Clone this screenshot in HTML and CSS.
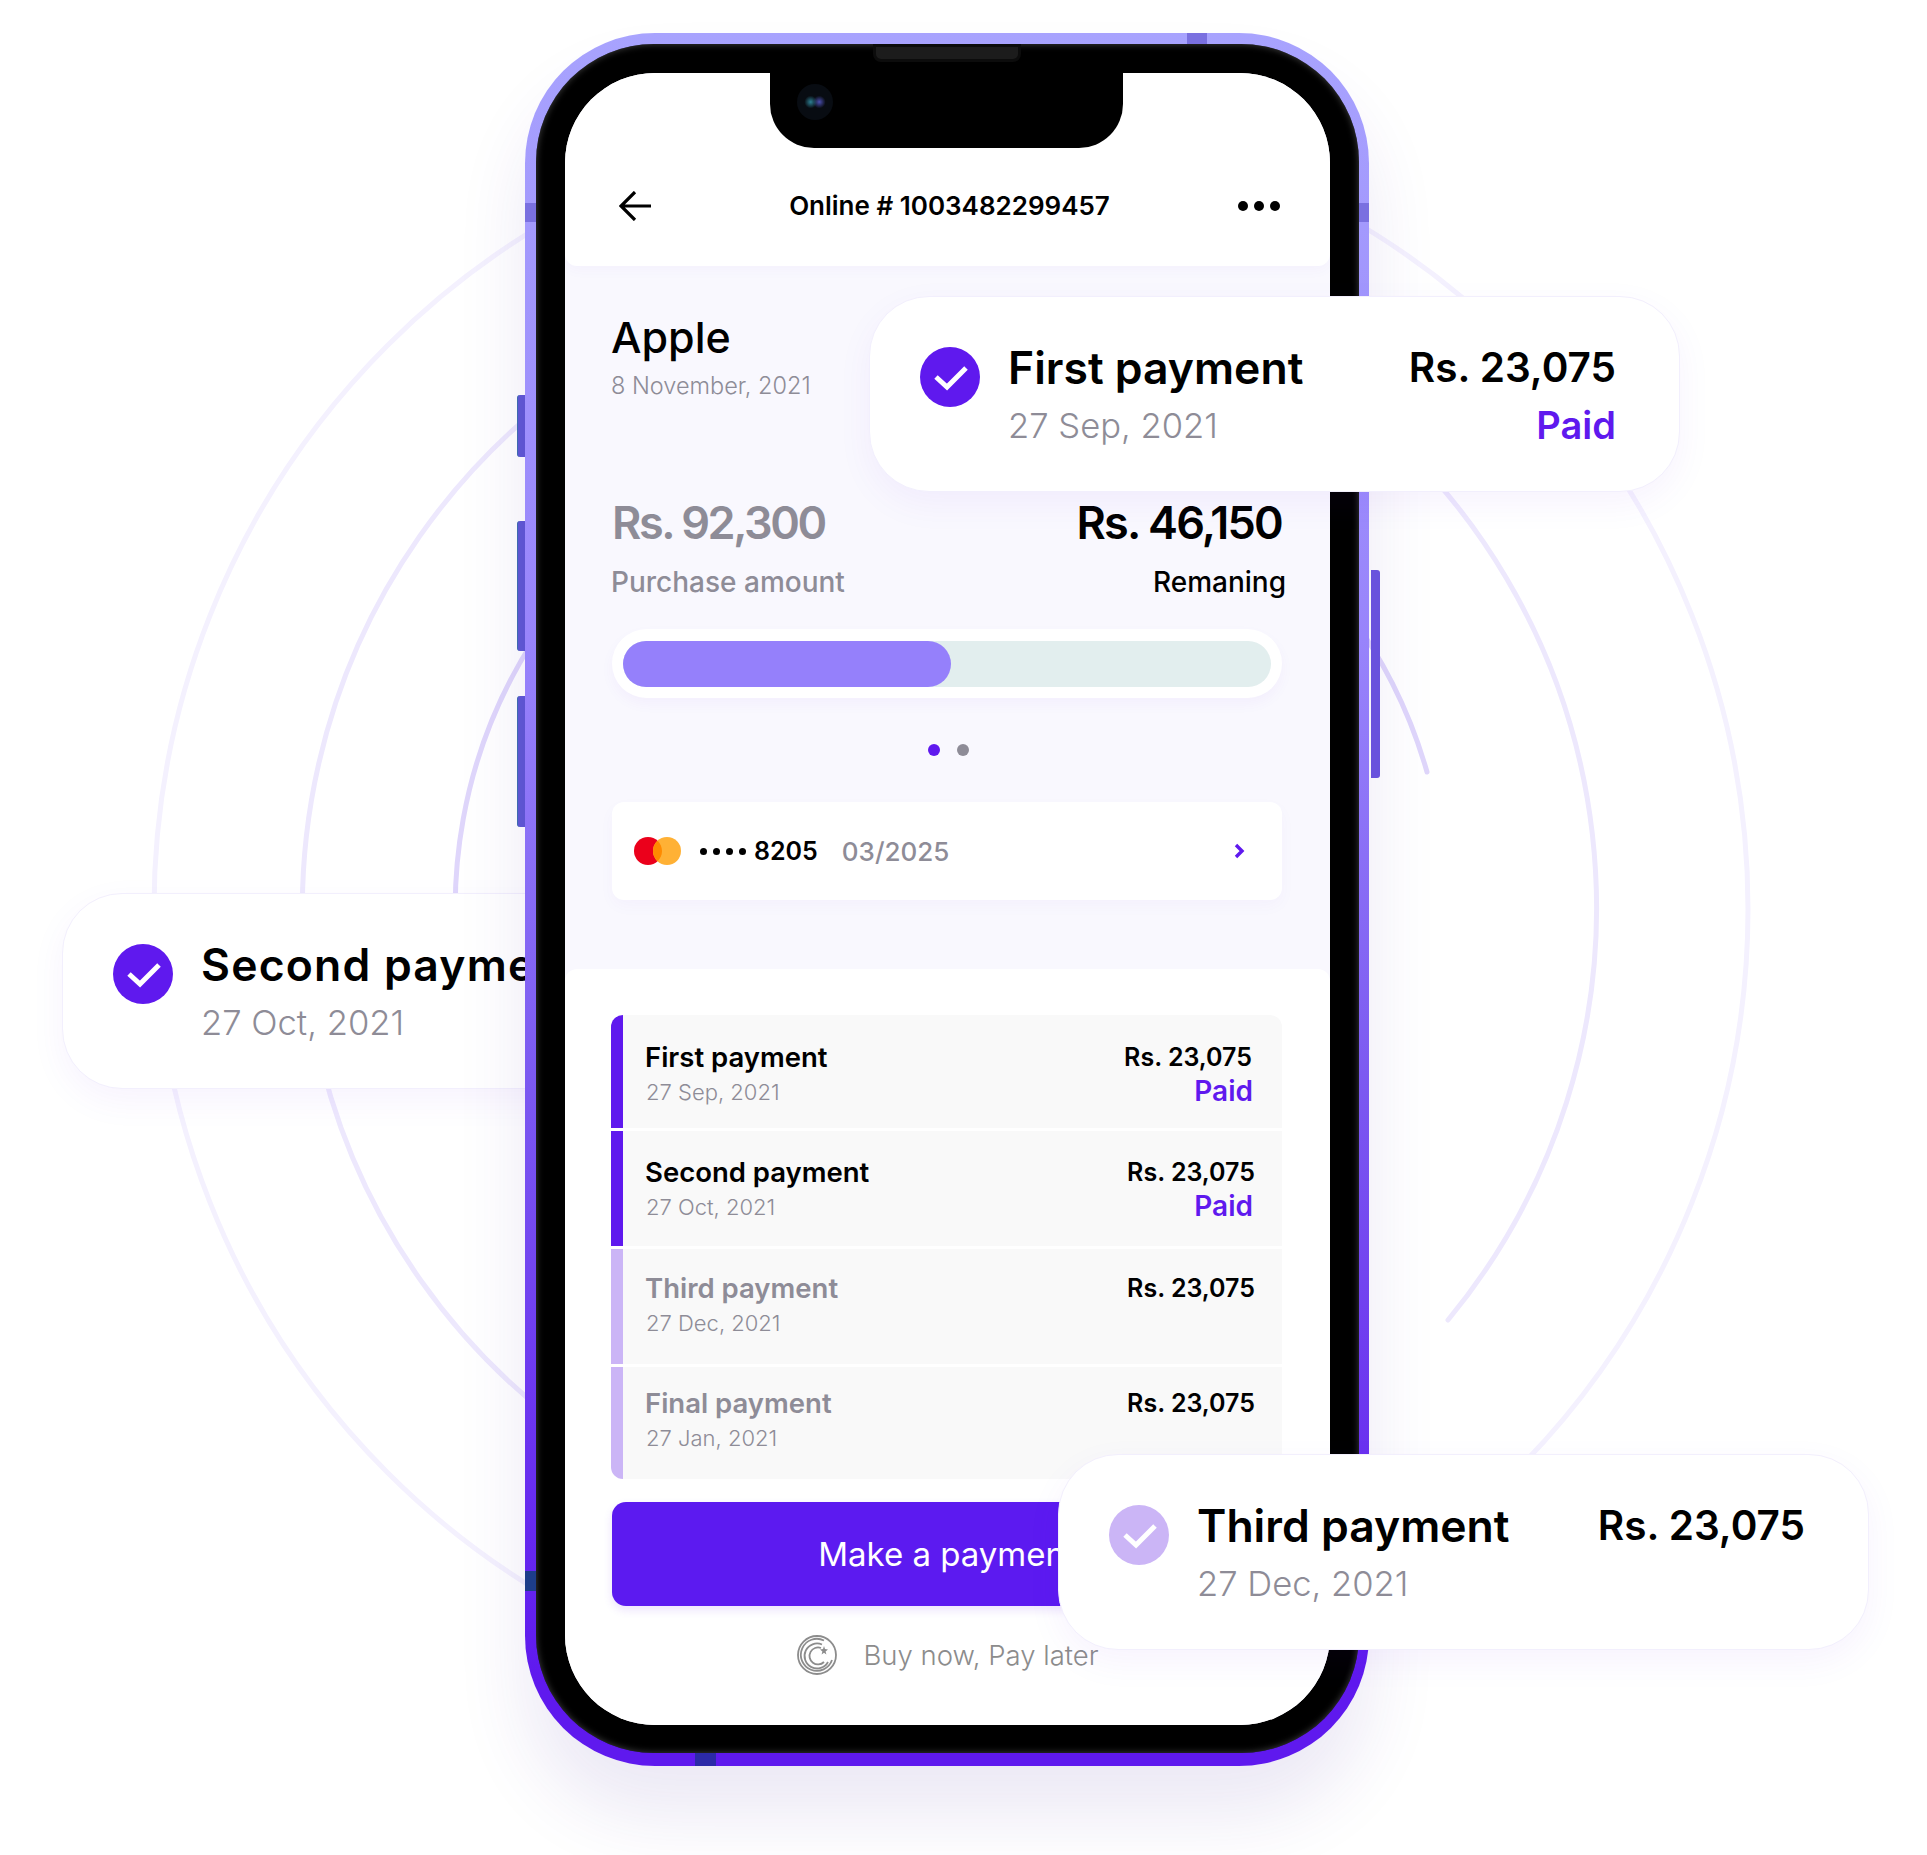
FILE: index.html
```html
<!DOCTYPE html>
<html lang="en">

<head>
  <meta charset="UTF-8">
  <title>Payment plan</title>
  <link rel="stylesheet" href="styles.css">
</head>

<body>
  <div class="stage">
    <svg class="rings" width="1927" height="1855" viewBox="0 0 1927 1855" fill="none" stroke-width="5" stroke-linecap="round">
      <circle cx="951" cy="909" r="797" stroke="#f4f1fe" />
      <path d="M1448 1320 A647 647 0 1 0 600 1452" stroke="#ede8fd" />
      <path d="M1427 772 A495.300 495.300 0 0 0 464 1000" stroke="#dfd6fb" />
    </svg>

    <div class="popup popup-second">
      <svg class="tick" viewBox="0 0 60 60"><circle cx="30" cy="30" r="30" fill="#5f19ee" /><polyline points="16,30 27,40 46,21" fill="none" stroke="#fff" stroke-width="5" /></svg>
      <div class="popup-text">
        <div class="popup-title">Second payment</div>
        <div class="popup-date">27 Oct, 2021</div>
      </div>
    </div>

    <span class="side-btn btn-a"></span>
    <span class="side-btn btn-b"></span>
    <span class="side-btn btn-c"></span>
    <span class="side-btn btn-d"></span>

    <div class="phone">
      <span class="band band-left"></span>
      <span class="band band-right"></span>
      <span class="band band-top"></span>
      <span class="band band-bottom"></span>
      <span class="band band-low"></span>
      <div class="bezel">
        <div class="speaker"></div>
        <div class="screen">
          <div class="notch"><span class="camera"></span></div>

          <header class="topbar">
            <svg class="back" width="32" height="30" viewBox="0 0 32 30" fill="none" stroke="#000" stroke-width="3.2">
              <path d="M32 15 H3 M16 1 L2 15 L16 29" />
            </svg>
            <div class="order">Online # 1003482299457</div>
            <div class="more"><i></i><i></i><i></i></div>
          </header>

          <section class="summary">
            <h1 class="shop">Apple</h1>
            <div class="shop-date">8 November, 2021</div>

            <div class="amounts">
              <div class="amount muted">Rs. 92,300</div>
              <div class="amount amount-left">Rs. 46,150</div>
            </div>
            <div class="amount-labels">
              <div class="muted">Purchase amount</div>
              <div>Remaning</div>
            </div>

            <div class="track">
              <div class="track-inner">
                <div class="track-fill"></div>
              </div>
            </div>

            <div class="pager"><i class="on"></i><i></i></div>

            <div class="pay-card">
              <svg class="mc" width="47" height="28" viewBox="0 0 47 28">
                <circle cx="14" cy="14" r="14" fill="#eb001b" />
                <circle cx="33" cy="14" r="14" fill="#ffb135" />
                <path d="M23.500 3.700 A14 14 0 0 1 23.500 24.300 A14 14 0 0 1 23.500 3.700" fill="#ff8a00" />
              </svg>
              <span class="pips"><i></i><i></i><i></i><i></i></span>
              <span class="last4">8205</span>
              <span class="expiry">03/2025</span>
              <svg class="chev" width="11" height="16" viewBox="0 0 11 16" fill="none" stroke="#5f19ee" stroke-width="3.400">
                <path d="M2 2 L8 8 L2 14" />
              </svg>
            </div>
          </section>

          <section class="panel">
            <div class="rows">
              <div class="row done row-first">
                <div>
                  <div class="row-title">First payment</div>
                  <div class="row-date">27 Sep, 2021</div>
                </div>
                <div class="row-right">
                  <div class="row-price price-first">Rs. 23,075</div>
                  <div class="row-paid">Paid</div>
                </div>
              </div>
              <div class="row done row-second">
                <div>
                  <div class="row-title">Second payment</div>
                  <div class="row-date">27 Oct, 2021</div>
                </div>
                <div class="row-right">
                  <div class="row-price">Rs. 23,075</div>
                  <div class="row-paid">Paid</div>
                </div>
              </div>
              <div class="row row-third">
                <div>
                  <div class="row-title muted">Third payment</div>
                  <div class="row-date">27 Dec, 2021</div>
                </div>
                <div class="row-right">
                  <div class="row-price">Rs. 23,075</div>
                </div>
              </div>
              <div class="row row-last">
                <div>
                  <div class="row-title muted">Final payment</div>
                  <div class="row-date">27 Jan, 2021</div>
                </div>
                <div class="row-right">
                  <div class="row-price">Rs. 23,075</div>
                </div>
              </div>
            </div>

            <button class="pay-btn" type="button">Make a payment</button>

            <div class="bnpl">
              <svg width="40" height="40" viewBox="0 0 40 40" fill="none" stroke="#8c8c8c" stroke-width="1.8">
                <circle cx="20" cy="20" r="19" />
                <path d="M27 5.500 A16 16 0 1 0 35 25" />
                <path d="M25 9.500 A12.500 12.500 0 1 0 31 27" />
                <path d="M24 13 A8.500 8.500 0 1 0 27 27" />
                <path d="M27 11 l1 3 3 .4 -2.400 2 .8 3 -2.400 -1.700 -2.400 1.700 .8 -3 -2.400 -2 3 -.4z" fill="#8c8c8c" stroke="none" />
              </svg>
              <span>Buy now, Pay later</span>
            </div>
          </section>
        </div>
      </div>
    </div>

    <div class="popup popup-first">
      <svg class="tick" viewBox="0 0 60 60"><circle cx="30" cy="30" r="30" fill="#5f19ee" /><polyline points="16,30 27,40 46,21" fill="none" stroke="#fff" stroke-width="5" /></svg>
      <div class="popup-text">
        <div class="popup-title">First payment</div>
        <div class="popup-date">27 Sep, 2021</div>
      </div>
      <div class="popup-right">
        <div class="popup-price">Rs. 23,075</div>
        <div class="popup-paid">Paid</div>
      </div>
    </div>

    <div class="popup popup-third">
      <svg class="tick" viewBox="0 0 60 60"><circle cx="30" cy="30" r="30" fill="#cbb5f6" /><polyline points="16,30 27,40 46,21" fill="none" stroke="#fff" stroke-width="5" /></svg>
      <div class="popup-text">
        <div class="popup-title">Third payment</div>
        <div class="popup-date">27 Dec, 2021</div>
      </div>
      <div class="popup-right">
        <div class="popup-price">Rs. 23,075</div>
      </div>
    </div>
  </div>
</body>

</html>
```
FILE: styles.css
```css
body {
  margin: 0;
  background: #fff;
  font-family: Inter, "Liberation Sans", sans-serif;
  color: #000;
}

.stage {
  position: relative;
  width: 1927px;
  height: 1855px;
  overflow: hidden;
}

.rings {
  position: absolute;
  left: 0;
  top: 0;
}

.muted {
  color: #8e8c97;
}

/* phone */
.phone {
  position: absolute;
  left: 525px;
  top: 33px;
  width: 844px;
  height: 1733px;
  padding: 11px 10px 13px 11px;
  box-sizing: border-box;
  border-radius: 130px;
  background: linear-gradient(180deg, #a8a3fe 0%, #9884fb 35%, #7c5af1 60%, #5f19ee 95%);
  box-shadow: 0 50px 70px rgba(70, 40, 160, 0.1);
}

.bezel {
  height: 100%;
  padding: 29px 29px 28px;
  box-sizing: border-box;
  border-radius: 118px;
  background: #000;
  box-shadow: inset 0 0 7px #444;
}

.speaker {
  position: absolute;
  left: 348px;
  top: 11px;
  width: 148px;
  height: 18px;
  box-sizing: border-box;
  border-radius: 0 0 8px 8px;
  border: 3px solid #0c0c0c;
  background: #1c1c1c;
}

.band {
  position: absolute;
  background: #7a70e0;
}

.band-left {
  left: 0;
  top: 170px;
  width: 11px;
  height: 19px;
}

.band-right {
  right: 0;
  top: 170px;
  width: 10px;
  height: 19px;
}

.band-top {
  left: 662px;
  top: 0;
  width: 20px;
  height: 11px;
}

.band-bottom {
  left: 170px;
  bottom: 0;
  width: 21px;
  height: 13px;
  background: #2c2aa8;
}

.band-low {
  left: 0;
  top: 1538px;
  width: 11px;
  height: 20px;
  background: #1d3d8a;
}

.side-btn {
  position: absolute;
  width: 9px;
  background: #5f58d4;
  border-left: 1px solid #3f6fb0;
  box-sizing: border-box;
}

.btn-a {
  left: 517px;
  top: 395px;
  height: 62px;
  border-radius: 3px 0 0 3px;
}

.btn-b {
  left: 517px;
  top: 521px;
  height: 130px;
  border-radius: 3px 0 0 3px;
}

.btn-c {
  left: 517px;
  top: 696px;
  height: 131px;
  border-radius: 3px 0 0 3px;
}

.btn-d {
  left: 1371px;
  top: 570px;
  height: 208px;
  border-radius: 0 3px 3px 0;
  border-left: none;
  background: #6b55e0;
}

.screen {
  position: relative;
  height: 100%;
  display: flex;
  flex-direction: column;
  border-radius: 90px;
  overflow: hidden;
  background: #f9f8fe;
}

.notch {
  position: absolute;
  left: 205px;
  top: 0;
  width: 353px;
  height: 75px;
  background: #000;
  border-radius: 0 0 44px 44px;
}

.camera {
  position: absolute;
  left: 27px;
  top: 11px;
  width: 36px;
  height: 36px;
  border-radius: 50%;
  background:
    radial-gradient(circle at 38% 50%, #2d7f93 0, rgba(45, 127, 147, 0) 22%),
    radial-gradient(circle at 62% 50%, #4b4fb0 0, rgba(75, 79, 176, 0) 22%),
    #080c12;
}

.topbar {
  height: 193px;
  padding: 113px 50px 0 54px;
  box-sizing: border-box;
  display: flex;
  justify-content: space-between;
  background: #fff;
  border-radius: 0 0 12px 12px;
  box-shadow: 0 4px 14px rgba(95, 25, 238, 0.03);
}

.back {
  margin-top: 5px;
}

.order {
  margin-left: 10px;
  font-size: 26px;
  font-weight: 600;
  line-height: 40px;
}

.more {
  display: flex;
  gap: 6px;
  height: 40px;
  align-items: center;
}

.more i {
  width: 10px;
  height: 10px;
  border-radius: 50%;
  background: #000;
}

/* top half */
.summary {
  padding: 46px 48px 0 47px;
}

.shop {
  margin: 0 0 0 -1px;
  font-size: 43px;
  font-weight: 500;
  line-height: 50px;
}

.shop-date {
  margin: 9px 0 0 -1px;
  font-size: 23.500px;
  font-weight: 300;
  line-height: 30px;
  color: #8e8c97;
}

.amounts {
  margin-top: 92px;
  display: flex;
  justify-content: space-between;
}

.amount {
  font-size: 45px;
  font-weight: 600;
  line-height: 60px;
  letter-spacing: -2.400px;
}

.amount-left {
  letter-spacing: -1.800px;
}

.amount-labels {
  margin: 12px -4px 0 -1px;
  display: flex;
  justify-content: space-between;
  font-size: 28px;
  font-weight: 500;
  line-height: 34px;
}

.track {
  margin-top: 30px;
  height: 69px;
  padding: 12px 11px 11px;
  box-sizing: border-box;
  background: #fff;
  border-radius: 35px;
  box-shadow: 0 6px 14px rgba(95, 25, 238, 0.04);
}

.track-inner {
  height: 100%;
  border-radius: 23px;
  background: #e2eeee;
}

.track-fill {
  width: 328px;
  height: 100%;
  border-radius: 23px;
  background: #9580fb;
}

.pager {
  margin-top: 46px;
  display: flex;
  justify-content: center;
  gap: 17px;
  padding-left: 3px;
}

.pager i {
  width: 12px;
  height: 12px;
  border-radius: 50%;
  background: #8e8c97;
}

.pager i.on {
  background: #5f19ee;
}

.pay-card {
  margin-top: 46px;
  height: 98px;
  padding: 0 37px 0 22px;
  box-sizing: border-box;
  display: flex;
  align-items: center;
  background: #fff;
  border-radius: 12px;
  box-shadow: 0 6px 16px rgba(95, 25, 238, 0.03);
  font-size: 25px;
  font-weight: 600;
}

.mc {
  margin-right: 19px;
}

.pips {
  display: flex;
  gap: 6px;
  margin-right: 8px;
}

.pips i {
  width: 7px;
  height: 7px;
  border-radius: 50%;
  background: #000;
}

.expiry {
  margin-left: 24px;
  color: #8e8c97;
  font-size: 26px;
  font-weight: 500;
}

.chev {
  margin-left: auto;
}

/* lower half */
.panel {
  flex: 1;
  margin-top: 69px;
  padding: 46px 48px 0 46px;
  background: #fff;
  border-radius: 12px 12px 0 0;
}

.rows {
  display: flex;
  flex-direction: column;
  gap: 3px;
}

.row {
  height: 115px;
  padding: 25px 27px 0 22px;
  box-sizing: border-box;
  display: flex;
  justify-content: space-between;
  background: #f9f9f9;
  border-left: 12px solid #cbb5f6;
}

.row.done {
  border-left-color: #5f19ee;
}

.row-first {
  height: 113px;
  border-top-left-radius: 12px;
  border-top-right-radius: 12px;
}

.row-second {
  padding-top: 24px;
}

.row-third {
  padding-top: 22px;
}

.row-last {
  height: 112px;
  padding-top: 19px;
  border-bottom-left-radius: 12px;
}

.row-title {
  font-size: 27.500px;
  font-weight: 600;
  line-height: 34px;
}

.row-date {
  margin-top: 3px;
  margin-left: 1px;
  font-size: 22px;
  font-weight: 300;
  line-height: 30px;
  color: #8e8c97;
}

.row-right {
  text-align: right;
}

.row-price {
  font-size: 25px;
  font-weight: 600;
  line-height: 34px;
}

.price-first {
  margin-right: 3px;
}

.row-paid {
  font-size: 28px;
  font-weight: 600;
  line-height: 34px;
  color: #5f19ee;
  margin-right: 2px;
}

.pay-btn {
  display: block;
  width: 670px;
  height: 104px;
  margin: 23px 0 0 1px;
  border: none;
  border-radius: 14px;
  background: #5c1af0;
  color: #fff;
  font-family: inherit;
  font-size: 33px;
  box-shadow: 0 4px 10px rgba(95, 25, 238, 0.12);
}

.bnpl {
  margin-top: 29px;
  display: flex;
  align-items: center;
  justify-content: center;
  gap: 26px;
  padding-left: 3px;
  font-size: 27.500px;
  font-weight: 300;
  color: #8c8c8c;
}

/* floating cards */
.popup {
  position: absolute;
  height: 196px;
  padding: 46px 63px 0 50px;
  box-sizing: border-box;
  display: flex;
  background: #fff;
  border: 1px solid #f2effd;
  border-radius: 60px;
  box-shadow: 0 12px 36px rgba(95, 25, 238, 0.05);
}

.popup-first {
  left: 869px;
  top: 296px;
  width: 811px;
}

.popup-second {
  left: 62px;
  top: 893px;
  width: 640px;
}

.popup-second .popup-title {
  letter-spacing: 1.200px;
}

.popup-third {
  left: 1058px;
  top: 1454px;
  width: 811px;
}

.tick {
  width: 60px;
  height: 60px;
  margin-top: 4px;
  flex-shrink: 0;
}

.popup-text {
  margin-left: 28px;
  margin-right: auto;
}

.popup-title {
  font-size: 44.500px;
  font-weight: 600;
  line-height: 50px;
  white-space: nowrap;
}

.popup-price {
  font-size: 40.500px;
  font-weight: 600;
  line-height: 50px;
  white-space: nowrap;
}

.popup-date {
  margin-top: 9px;
  font-size: 34.600px;
  font-weight: 300;
  line-height: 46px;
  color: #8e8c97;
}

.popup-right {
  text-align: right;
}

.popup-paid {
  margin-top: 9px;
  font-size: 38px;
  font-weight: 600;
  line-height: 46px;
  color: #5f19ee;
}
```
